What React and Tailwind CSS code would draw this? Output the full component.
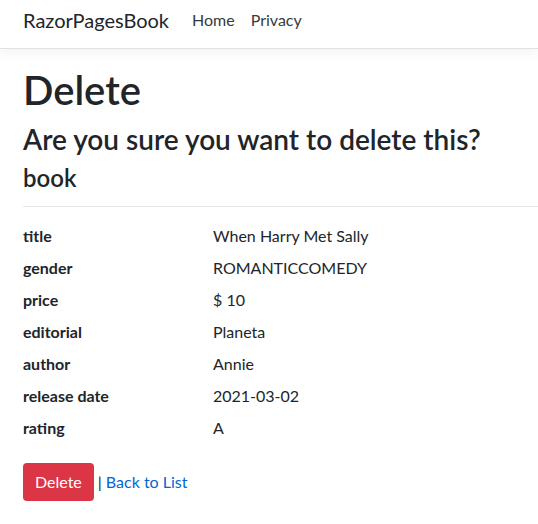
import React from 'react';

const rows = [
  ['title', 'When Harry Met Sally'],
  ['gender', 'ROMANTICCOMEDY'],
  ['price', '$ 10'],
  ['editorial', 'Planeta'],
  ['author', 'Annie'],
  ['release date', '2021-03-02'],
  ['rating', 'A'],
];

export default function App() {
  return (
    <div className="min-h-screen bg-white text-[#212529] font-['Lato','Open_Sans',sans-serif]">
      <header>
        <nav className="flex h-[49px] items-start border-b border-[#dee2e6] bg-white px-[23px] pt-[5px] shadow-[0_4px_12px_rgba(0,0,0,0.05)]">
          <a className="mr-[23px] text-[20px] leading-[30px] text-[#212529]">RazorPagesBook</a>
          <a className="pr-2 text-[16px] leading-[30px] text-[#343a40]">Home</a>
          <a className="px-2 text-[16px] leading-[30px] text-[#343a40]">Privacy</a>
        </nav>
      </header>

      <main className="pl-[23px] pt-[17px]">
        <h1 className="mb-2 text-[40px] font-semibold leading-[48px]">Delete</h1>
        <h3 className="mb-[7px] text-[28px] font-semibold leading-[34px]">Are you sure you want to delete this?</h3>
        <div>
          <h4 className="mb-2 text-[24px] font-semibold leading-[29px]">book</h4>
          <hr className="mt-[14px] mb-[13px] border-t border-[#e5e5e5]" />
          <dl>
            {rows.map(([k, v]) => (
              <div key={k} className="flex h-[32px] items-center text-[16px]">
                <dt className="w-[190px] font-bold">{k}</dt>
                <dd>{v}</dd>
              </div>
            ))}
          </dl>

          <form className="mt-[19px] flex items-center text-[16px]">
            <button type="button" className="h-[38px] rounded-[4px] bg-[#dc3545] px-3 text-white">Delete</button>
            <span className="ml-1">|</span>
            <a className="ml-1 text-[#0366d6]">Back to List</a>
          </form>
        </div>
      </main>
    </div>
  );
}
